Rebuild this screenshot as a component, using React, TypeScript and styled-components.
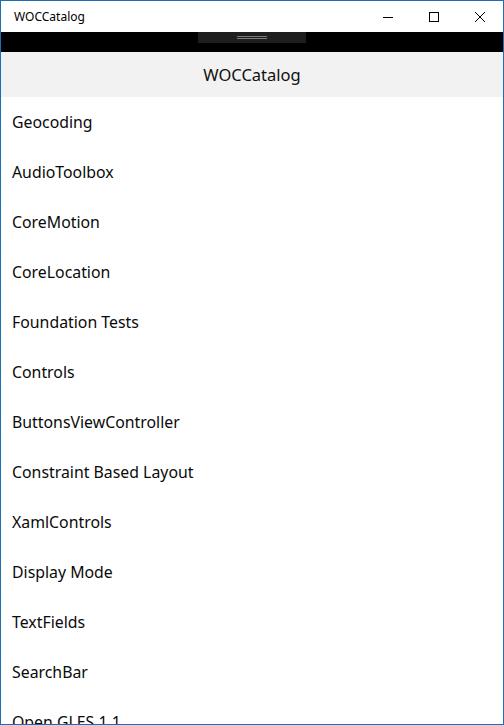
import React from "react";
import styled, { createGlobalStyle } from "styled-components";

const Global = createGlobalStyle`
  html, body { margin: 0; padding: 0; background: #fff; }
  body { font-family: "Noto Sans", "Open Sans", sans-serif; }
`;

const Window = styled.div`
  width: 504px;
  height: 725px;
  box-sizing: border-box;
  border: 1px solid #1f6db1;
  display: flex;
  flex-direction: column;
  overflow: hidden;
  background: #fff;
`;

const TitleBar = styled.div`
  height: 31px;
  flex: none;
  display: flex;
  align-items: center;
  background: #fff;
`;

const TitleText = styled.div`
  flex: 1;
  padding-left: 13px;
  font-size: 12px;
  color: #000;
`;

const CaptionButton = styled.div`
  width: 46px;
  height: 31px;
  display: flex;
  align-items: center;
  justify-content: center;
`;

const DragBand = styled.div`
  height: 20px;
  flex: none;
  background: #000;
  display: flex;
  justify-content: center;
`;

const Handle = styled.div`
  width: 108px;
  height: 11px;
  background: #1e1e1e;
  display: flex;
  flex-direction: column;
  align-items: center;
  justify-content: center;
  gap: 1px;
`;

const HandleLine = styled.div`
  width: 30px;
  height: 1px;
  background: #7a7a7a;
`;

const NavHeader = styled.div`
  height: 45px;
  flex: none;
  background: #f2f2f2;
  display: flex;
  align-items: center;
  justify-content: center;
  font-size: 16.5px;
  color: #111;
`;

const List = styled.div`
  display: flex;
  flex-direction: column;
`;

const Row = styled.div`
  height: 50px;
  flex: none;
  display: flex;
  align-items: center;
  padding-left: 11px;
  font-size: 15.85px;
  color: #0a0a0a;
`;

const items = [
  "Geocoding",
  "AudioToolbox",
  "CoreMotion",
  "CoreLocation",
  "Foundation Tests",
  "Controls",
  "ButtonsViewController",
  "Constraint Based Layout",
  "XamlControls",
  "Display Mode",
  "TextFields",
  "SearchBar",
  "Open GLES 1.1",
];

export default function App() {
  return (
    <>
      <Global />
      <Window>
        <TitleBar>
          <TitleText>WOCCatalog</TitleText>
          <CaptionButton>
            <svg width="12" height="12" viewBox="0 0 12 12">
              <path d="M1 6.5H11" stroke="#000" strokeWidth="1" />
            </svg>
          </CaptionButton>
          <CaptionButton>
            <svg width="12" height="12" viewBox="0 0 12 12">
              <rect x="1.5" y="1.5" width="9" height="9" fill="none" stroke="#000" strokeWidth="1" />
            </svg>
          </CaptionButton>
          <CaptionButton>
            <svg width="12" height="12" viewBox="0 0 12 12">
              <path d="M1 1L11 11M11 1L1 11" stroke="#000" strokeWidth="1" />
            </svg>
          </CaptionButton>
        </TitleBar>
        <DragBand>
          <Handle>
            <HandleLine />
            <HandleLine />
          </Handle>
        </DragBand>
        <NavHeader>WOCCatalog</NavHeader>
        <List>
          {items.map((t) => (
            <Row key={t}>{t}</Row>
          ))}
        </List>
      </Window>
    </>
  );
}
